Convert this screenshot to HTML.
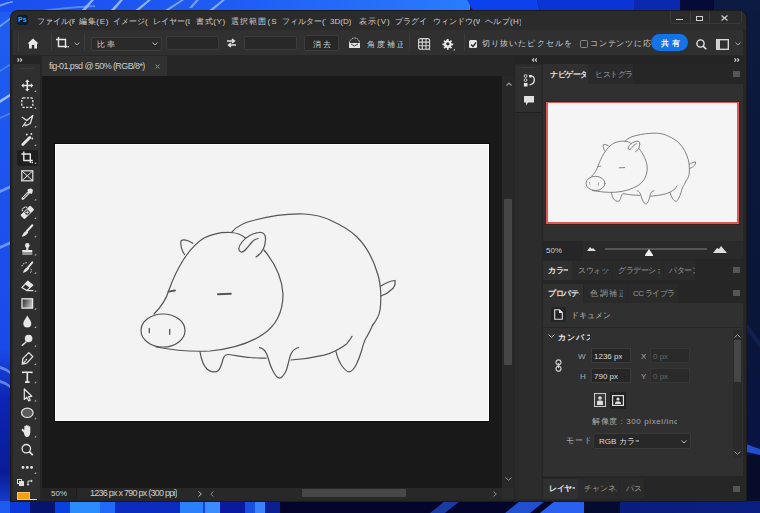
<!DOCTYPE html>
<html><head><meta charset="utf-8">
<style>
*{margin:0;padding:0;box-sizing:border-box}
html,body{width:760px;height:513px;overflow:hidden;background:#0b1a3f;font-family:"Liberation Sans",sans-serif;color:#d0d0d0}
.a{position:absolute}
.t{position:absolute;white-space:nowrap;font-size:8px;line-height:11px;color:#cfcfcf;overflow:hidden}
svg{position:absolute;overflow:visible}
</style></head><body>
<!-- wallpaper -->
<svg class="a" style="left:0;top:0" width="760" height="513" viewBox="0 0 760 513">
  <defs>
    <linearGradient id="gl" x1="0" y1="0" x2="0" y2="1">
      <stop offset="0" stop-color="#1f5ef2"/><stop offset="0.68" stop-color="#1a4ae8"/><stop offset="0.78" stop-color="#0c24b4"/><stop offset="0.92" stop-color="#0a1c98"/><stop offset="1" stop-color="#1a46dc"/>
    </linearGradient>
    <linearGradient id="gr" x1="0" y1="0" x2="0" y2="1">
      <stop offset="0" stop-color="#0b1a3e"/><stop offset="0.6" stop-color="#0a1638"/><stop offset="1" stop-color="#08124a"/>
    </linearGradient>
    <linearGradient id="gt" x1="0" y1="0" x2="1" y2="0">
      <stop offset="0" stop-color="#1a4ef0"/><stop offset="0.5" stop-color="#1f5cf5"/><stop offset="1" stop-color="#2a7cff"/>
    </linearGradient>
    <linearGradient id="gb" x1="0" y1="0" x2="1" y2="0">
      <stop offset="0" stop-color="#081660"/><stop offset="1" stop-color="#0a1f80"/>
    </linearGradient>
  </defs>
  <rect x="0" y="0" width="760" height="513" fill="url(#gr)"/>
  <rect x="0" y="0" width="12" height="513" fill="url(#gl)"/>
  <rect x="0" y="0" width="470" height="12" fill="url(#gt)"/>
  <polygon points="467,0 537,0 540,12 474,12" fill="#0c42ee"/>
  <polygon points="537,0 634,0 636,12 540,12" fill="#0a34d4"/>
  <rect x="634" y="0" width="46" height="12" fill="#0b28b0"/>
  <rect x="680" y="0" width="34" height="12" fill="#050a36"/>
  <rect x="714" y="0" width="46" height="12" fill="#0b1b42"/>
  <path d="M0,4.5 C4,3 8,2 13,1 L13,2.5 C8,3.5 4,5 0,6.5Z" fill="#8fb6ff" opacity="0.8"/>
  <path d="M35,11 C55,8 75,6 95,5 L95,7 C75,8 55,10 38,12Z" fill="#6aa0ff" opacity="0.7"/>
  <path d="M80,12 L91,0 L94,0 L84,12Z" fill="#a9c8ff" opacity="0.8"/>
  <path d="M109,12 L120,0 L123,0 L113,12Z" fill="#a9c8ff" opacity="0.8"/>
  <path d="M133,12 L148,0 L151,0 L137,12Z" fill="#a9c8ff" opacity="0.8"/>
  <path d="M162,12 L181,0 L184,0 L166,12Z" fill="#a9c8ff" opacity="0.7"/>
  <path d="M189,8 L196,0 L199,0 L192,8Z" fill="#a9c8ff" opacity="0.6"/>
  <path d="M207,12 L222,0 L225,0 L211,12Z" fill="#a9c8ff" opacity="0.7"/>
  <path d="M0,25 L11,17 L11,19 L0,27.5Z" fill="#9cc0ff" opacity="0.6"/>
  <path d="M0,70 L11,63 L11,65 L0,72Z" fill="#9cc0ff" opacity="0.35"/>
  <path d="M0,100 L11,93 L11,96 L0,103Z" fill="#b8d4ff" opacity="0.8"/>
  <path d="M0,117 L11,112 L11,114 L0,119Z" fill="#a0c4ff" opacity="0.35"/>
  <path d="M0,190 L11,185 L11,188 L0,193Z" fill="#a0c4ff" opacity="0.6"/>
  <path d="M0,246 L11,241 L11,244 L0,249Z" fill="#a0c4ff" opacity="0.6"/>
  <path d="M0,366 C4,367 8,369 11,372 L11,375 C8,372 4,370 0,369Z" fill="#a0c4ff" opacity="0.55"/>
  <path d="M0,380 C4,381 8,383 11,386 L11,389 C8,386 4,384 0,383Z" fill="#a0c4ff" opacity="0.55"/>
  <!-- right strip -->
  <path d="M746,322 C752,330 756,336 760,342 L760,348 C756,343 752,337 746,330Z" fill="#15285e" opacity="0.6"/>
  <path d="M746,444 C752,446 756,448 760,449 L760,455 C756,454 752,453 746,452Z" fill="#2456d8" opacity="0.9"/>
  <rect x="746" y="455" width="14" height="46" fill="#060c2a"/>
  <!-- bottom strip -->
  <rect x="0" y="501" width="760" height="12" fill="url(#gb)"/>
  <rect x="0" y="501" width="10" height="12" fill="#1d5cf0"/>
  <rect x="10" y="501" width="20" height="12" fill="#0c3ad8"/>
  <rect x="30" y="501" width="25" height="12" fill="#061470"/>
  <rect x="55" y="501" width="15" height="12" fill="#0a40e0"/>
  <rect x="70" y="501" width="30" height="12" fill="#2a8cff"/>
  <rect x="100" y="501" width="15" height="12" fill="#1f6af8"/>
  <rect x="115" y="501" width="65" height="12" fill="#0c2cc0"/>
  <rect x="180" y="501" width="23" height="12" fill="#2a80ff"/>
  <rect x="203" y="501" width="2" height="12" fill="#1a40e0"/>
  <rect x="205" y="501" width="15" height="12" fill="#3a8cff"/>
  <rect x="220" y="501" width="25" height="12" fill="#0a1aa0"/>
  <rect x="245" y="501" width="10" height="12" fill="#1a50e0"/>
  <rect x="255" y="501" width="10" height="12" fill="#3a80ff"/>
  <rect x="265" y="501" width="15" height="12" fill="#0a2090"/>
  <rect x="280" y="501" width="300" height="12" fill="#03062a"/>
  <polygon points="430,513 445,501 460,501 445,513" fill="#1a3aa0"/>
  <polygon points="505,513 520,501 545,501 530,513" fill="#2050d0"/>
  <polygon points="540,513 555,501 580,501 570,513" fill="#2a60f0"/>
  <polygon points="565,513 575,501 582,501 578,513" fill="#2a60f0"/>
  <rect x="580" y="501" width="40" height="12" fill="#050a30"/>
  <polygon points="570,513 575,504 584,501 584,513" fill="#2a60f0"/>
</svg>

<!-- window -->
<div class="a" style="left:10px;top:10px;width:737px;height:492px;background:#1a1a1a;border-radius:8px 8px 0 0"></div>
<div class="a" style="left:11px;top:11px;width:735px;height:490px;background:#262626;border-radius:7px 7px 0 0"></div>
<!-- title bar -->
<div class="a" style="left:11px;top:11px;width:735px;height:19px;background:#2b2b2b;border-radius:7px 7px 0 0"></div>
<div class="a" style="left:17px;top:15px;width:11px;height:10px;background:#001e36;border-radius:2px"></div>
<div class="t" style="left:18px;top:15px;font-size:7px;line-height:10px;color:#31a8ff;font-weight:bold">Ps</div>
<div class="t" style="left:37px;top:16px;width:38px">ファイル(F)</div>
<div class="t" style="left:79px;top:16px;letter-spacing:0.68px;width:30px">編集(E)</div>
<div class="t" style="left:113px;top:16px;width:35px">イメージ(I)</div>
<div class="t" style="left:153px;top:16px;width:37px">レイヤー(L)</div>
<div class="t" style="left:196px;top:16px;letter-spacing:0.64px;width:30px">書式(Y)</div>
<div class="t" style="left:231px;top:16px;letter-spacing:1.1px;width:46px">選択範囲(S)</div>
<div class="t" style="left:282px;top:16px;width:44px">フィルター(T)</div>
<div class="t" style="left:330px;top:16px">3D(D)</div>
<div class="t" style="left:359px;top:16px;letter-spacing:1.0px;width:31px">表示(V)</div>
<div class="t" style="left:395px;top:16px;width:33px">プラグイン</div>
<div class="t" style="left:433px;top:16px;width:47px">ウィンドウ(W)</div>
<div class="t" style="left:485px;top:16px;letter-spacing:0.35px;width:36px">ヘルプ(H)</div>
<!-- window controls -->
<div class="a" style="left:670px;top:11px;width:72px;height:13px;border:1px solid #3a3a3a;border-top:none;border-radius:0 0 3px 3px"></div>
<div class="a" style="left:690px;top:11px;width:1px;height:13px;background:#3a3a3a"></div>
<div class="a" style="left:709px;top:11px;width:1px;height:13px;background:#3a3a3a"></div>
<div class="a" style="left:676px;top:19px;width:7px;height:1px;background:#cfcfcf"></div>
<div class="a" style="left:696px;top:16px;width:7px;height:5px;border:1px solid #cfcfcf"></div>
<svg style="left:721px;top:15px" width="7" height="6"><path d="M0.5,0.5L6.5,5.5M6.5,0.5L0.5,5.5" stroke="#cfcfcf" stroke-width="1.1"/></svg>

<!-- options bar -->
<div class="a" style="left:13px;top:30px;width:730px;height:25px;background:#303030"></div>
<div class="a" style="left:18px;top:33px;width:1px;height:18px;background:#3c3c3c"></div>
<svg style="left:27px;top:38px" width="12" height="11" viewBox="0 0 12 11"><path d="M6,0.5 L11.5,5.5 L10,5.5 L10,10.5 L7.2,10.5 L7.2,7 L4.8,7 L4.8,10.5 L2,10.5 L2,5.5 L0.5,5.5Z" fill="#e8e8e8"/></svg>
<div class="a" style="left:51px;top:33px;width:1px;height:18px;background:#3c3c3c"></div>
<svg style="left:56px;top:37px" width="14" height="12" viewBox="0 0 14 12"><path d="M2.5,0 V9.5 H11 M0,2.5 H9.5 V11" fill="none" stroke="#e8e8e8" stroke-width="1.4"/><rect x="11.5" y="9" width="1.5" height="1.5" fill="#ccc"/></svg>
<svg style="left:74px;top:42px" width="6" height="4" viewBox="0 0 6 4"><path d="M0.5,0.5 L3,3 L5.5,0.5" fill="none" stroke="#aaa" stroke-width="1"/></svg>
<div class="a" style="left:84px;top:33px;width:1px;height:18px;background:#3c3c3c"></div>
<div class="a" style="left:91px;top:37px;width:71px;height:14px;background:#2a2a2a;border:1px solid #3e3e3e;border-radius:2px"></div>
<div class="t" style="left:97px;top:39px;letter-spacing:2px;width:19px">比率</div>
<svg style="left:152px;top:42px" width="6" height="4" viewBox="0 0 6 4"><path d="M0.5,0.5 L3,3 L5.5,0.5" fill="none" stroke="#bbb" stroke-width="1"/></svg>
<div class="a" style="left:166px;top:36px;width:53px;height:14px;background:#282828;border:1px solid #3c3c3c;border-radius:2px"></div>
<svg style="left:227px;top:38px" width="9" height="10" viewBox="0 0 9 10"><path d="M0,3 H7 M5,1 L7.5,3 L5,5 M9,7 H2 M4,5 L1.5,7 L4,9" fill="none" stroke="#e0e0e0" stroke-width="1.4"/></svg>
<div class="a" style="left:244px;top:36px;width:53px;height:14px;background:#282828;border:1px solid #3c3c3c;border-radius:2px"></div>
<div class="a" style="left:304px;top:35px;width:35px;height:16px;background:#272727;border:1px solid #3c3c3c;border-radius:2px"></div>
<div class="t" style="left:313px;top:39px;letter-spacing:2px;width:19px">消去</div>
<svg style="left:348px;top:37px" width="13" height="12" viewBox="0 0 13 12"><path d="M1.5,6 A5,5 0 0 1 11.5,6" fill="none" stroke="#ddd" stroke-width="1" stroke-dasharray="1.5 1"/><rect x="1" y="6" width="11" height="5" fill="#e0e0e0"/><path d="M3,7 L6.5,9 L10,7" fill="none" stroke="#303030" stroke-width="0.9"/></svg>
<div class="t" style="left:367px;top:39px;letter-spacing:2.1px;width:36px">角度補正</div>
<svg style="left:418px;top:38px" width="14" height="13" viewBox="0 0 14 13"><rect x="0.6" y="0.6" width="11" height="10.6" rx="2" fill="none" stroke="#d6d6d6" stroke-width="1.1"/><path d="M4.3,0.6V11.2 M8,0.6V11.2 M0.6,4.1H11.6 M0.6,7.7H11.6" fill="none" stroke="#d6d6d6" stroke-width="1.1"/><path d="M10.3,11.2h2.4l-1.2,1.3z" fill="#ccc"/></svg>
<div class="a" style="left:409px;top:33px;width:1px;height:18px;background:#3a3a3a"></div>
<svg style="left:442px;top:39px" width="14" height="12" viewBox="0 0 14 12"><path d="M5,0h1.6v1.6l1.3,0.6l1.1,-1.1l1.1,1.1l-1.1,1.1l0.6,1.3h1.6v1.6h-1.6l-0.6,1.3l1.1,1.1l-1.1,1.1l-1.1,-1.1l-1.3,0.6v1.6h-1.6v-1.6l-1.3,-0.6l-1.1,1.1l-1.1,-1.1l1.1,-1.1l-0.6,-1.3h-1.6v-1.6h1.6l0.6,-1.3l-1.1,-1.1l1.1,-1.1l1.1,1.1z" fill="#e8e8e8"/><circle cx="5.8" cy="4.8" r="1.6" fill="#303030"/><path d="M11,11.5h2v-2z" fill="#bbb"/></svg>
<div class="a" style="left:464px;top:33px;width:1px;height:18px;background:#3c3c3c"></div>
<div class="a" style="left:469px;top:40px;width:8px;height:8px;background:#e6e6e6;border-radius:1.5px"></div>
<svg style="left:469.5px;top:40.5px" width="7" height="7" viewBox="0 0 7 7"><path d="M1,3.5 L3,5.5 L6,1.5" fill="none" stroke="#2b2b2b" stroke-width="1.4"/></svg>
<div class="t" style="left:482px;top:38px;letter-spacing:1.1px;width:89px">切り抜いたピクセルを削除</div>
<div class="a" style="left:580px;top:40px;width:8px;height:8px;border:1px solid #8a8a8a;border-radius:1.5px"></div>
<div class="t" style="left:590px;top:38px;width:62px;letter-spacing:0.75px">コンテンツに応じる</div>
<div class="a" style="left:651px;top:34px;width:37px;height:17px;background:#1473e6;border-radius:9px"></div>
<div class="t" style="left:661px;top:38px;color:#fff;font-weight:bold;letter-spacing:3px;width:21px">共有</div>
<svg style="left:696px;top:39px" width="11" height="11" viewBox="0 0 11 11"><circle cx="4.5" cy="4.5" r="3.6" fill="none" stroke="#e6e6e6" stroke-width="1.4"/><path d="M7,7 L10.3,10.3" stroke="#e6e6e6" stroke-width="1.6"/></svg>
<svg style="left:716px;top:39px" width="13" height="11" viewBox="0 0 13 11"><rect x="0.7" y="0.7" width="11.6" height="9.6" fill="none" stroke="#e0e0e0" stroke-width="1.3"/><rect x="1" y="1" width="3" height="9" fill="#cfcfcf"/></svg>
<svg style="left:735px;top:42px" width="6" height="4" viewBox="0 0 6 4"><path d="M0.5,0.5 L3,3 L5.5,0.5" fill="none" stroke="#aaa" stroke-width="1"/></svg>

<!-- toolbar -->
<div class="a" style="left:13px;top:56px;width:27px;height:8px;background:#242424"></div>
<svg style="left:17px;top:58px" width="6" height="4" viewBox="0 0 6 4"><path d="M0.5,0.3L2,2L0.5,3.7 M3.3,0.3L4.8,2L3.3,3.7" fill="none" stroke="#ddd" stroke-width="1.1"/></svg>
<div class="a" style="left:13px;top:64px;width:27px;height:435px;background:#2f2f2f"></div>
<div class="a" style="left:20px;top:68px;width:14px;height:1px;background:#3a3a3a"></div>
<div class="a" style="left:17px;top:150px;width:21px;height:16px;background:#1f1f1f;border-radius:2px"></div>
<svg style="left:0;top:0" width="760" height="513" viewBox="0 0 760 513" fill="none" stroke="#e6e6e6" stroke-width="1.3">
<defs><linearGradient id="grd" x1="0" y1="0" x2="1" y2="0.3"><stop offset="0" stop-color="#222"/><stop offset="1" stop-color="#bdbdbd"/></linearGradient></defs>
<g transform="translate(27.3,85.5)"><path d="M0,-4.2V4.2 M-4.2,0H4.2" stroke-width="1.5"/><path d="M0,-6L-2.2,-3.6H2.2Z M0,6L-2.2,3.6H2.2Z M-6,0L-3.6,-2.2V2.2Z M6,0L3.6,-2.2V2.2Z" fill="#e6e6e6" stroke="none"/></g>
<g transform="translate(27.3,102.6)"><rect x="-5.5" y="-4.7" width="11" height="9.4" rx="1.5" stroke-width="1.3" stroke-dasharray="2.2 1.4"/></g>
<g transform="translate(27.3,121)"><path d="M-5.5,-4 L-0.5,-0.5 L5.5,-5.5 L3,2.5 L-2,5 M-1.5,1 L-5,6 M-4,4 L1,4" stroke-width="1.2" stroke-linejoin="round"/></g>
<g transform="translate(27.3,139.5)"><path d="M-4.5,5 L2.5,-2" stroke-width="2.8" stroke-linecap="round"/><circle cx="-0.5" cy="-5" r="0.9" fill="#e6e6e6" stroke="none"/><circle cx="4" cy="-5.5" r="0.9" fill="#e6e6e6" stroke="none"/><circle cx="5" cy="-1" r="0.9" fill="#e6e6e6" stroke="none"/></g>
<g transform="translate(27.3,157.5)"><path d="M-3.5,-6 V3 H5.5 M-6,-3.5 H3 V5.5" stroke-width="1.4"/><rect x="4.3" y="4.3" width="1.4" height="1.4" fill="#e6e6e6" stroke="none"/></g>
<g transform="translate(27.3,175.8)"><rect x="-5.5" y="-5" width="11" height="10" stroke-width="1.2"/><path d="M-5.5,-5 L5.5,5 M5.5,-5 L-5.5,5" stroke-width="1"/></g>
<g transform="translate(27.3,194)"><circle cx="3.3" cy="-3.3" r="2.3" fill="#e6e6e6" stroke="none"/><path d="M0.5,-4.5 L4.5,-0.5" stroke-width="1.8"/><path d="M1.5,-1.5 L-4.5,4.5" stroke-width="2.6" stroke-linecap="round"/><path d="M0.8,-0.8 L-4,4" stroke="#2f2f2f" stroke-width="0.9"/></g>
<g transform="translate(27.3,212.4)"><g transform="rotate(-45)"><rect x="-7" y="-3" width="14" height="6" rx="1.2" fill="#e6e6e6" stroke="none"/><rect x="-2.2" y="-2.2" width="4.4" height="4.4" fill="#2f2f2f" stroke="none"/><path d="M-1.5,-1.5L1.5,1.5M1.5,-1.5L-1.5,1.5" stroke-width="0.8"/></g><path d="M-5,-1 A3.5,3.5 0 0 1 0,-5" stroke-width="1"/></g>
<g transform="translate(27.3,230.7)"><path d="M5,-5.5 L-0.5,0.5" stroke-width="2" stroke-linecap="round"/><path d="M-0.5,0 C-2.5,0.5 -4.5,2.5 -5.5,6 C-2.5,5.5 -0.5,4 1,1.5Z" fill="#e6e6e6" stroke="none"/></g>
<g transform="translate(27.3,249)"><circle cx="0" cy="-3.6" r="2.3" fill="#e6e6e6" stroke="none"/><rect x="-1" y="-2" width="2" height="3" fill="#e6e6e6" stroke="none"/><rect x="-5" y="1" width="10" height="2.6" fill="#e6e6e6" stroke="none"/><path d="M-5,5 H5" stroke-width="1.1"/></g>
<g transform="translate(27.3,267.3)"><path d="M5,-5 L0.5,0.5" stroke-width="1.9" stroke-linecap="round"/><path d="M0.5,0 C-1.5,0.5 -3.5,2.5 -4.5,5.5 C-1.5,5 0.5,3.5 2,1Z" fill="#e6e6e6" stroke="none"/><path d="M-5.5,-1 C-5,-3.5 -2,-5 0.5,-4.5 M3.5,1.5 C4.5,3 4,5 2.5,6" stroke-width="1" stroke-dasharray="1.5 1"/></g>
<g transform="translate(27.3,285.6)"><path d="M-5.5,2 L0.5,-4.5 L5.5,-0.5 L-0.5,5 Z" stroke-width="1.2" stroke-linejoin="round"/><path d="M0.5,-4.5 L5.5,-0.5 L2.5,2.3 L-2.5,-1.5Z" fill="#e6e6e6" stroke="none"/><path d="M-0.5,5 H6" stroke-width="1.2"/></g>
<g transform="translate(27.3,303.3)"><rect x="-5.3" y="-4.5" width="10.6" height="9.3" fill="url(#grd)" stroke-width="1.3"/></g>
<g transform="translate(27.3,321.6)"><path d="M0,-6 C2,-2.5 4,-0.5 4,2 A4,4 0 0 1 -4,2 C-4,-0.5 -2,-2.5 0,-6Z" fill="#e6e6e6" stroke="none"/></g>
<g transform="translate(27.3,340.3)"><circle cx="1.3" cy="-1.8" r="3.8" fill="#e6e6e6" stroke="none"/><path d="M-1,1.5 L-5.5,5.5" stroke-width="1.5"/></g>
<g transform="translate(27.3,358.6)"><path d="M-5,5.5 L-4.5,0 L1.5,-6 L5.5,-2 L-0.5,4.5 Z" stroke-width="1.3" stroke-linejoin="round"/><circle cx="-1" cy="1" r="0.9" fill="#e6e6e6" stroke="none"/><path d="M-5,5.5 L-1.5,2"/></g>
<g transform="translate(27.3,376.8)"><path d="M-4.5,-4.5 H4.5 M-4.5,-5.2 V-3.5 M4.5,-5.2 V-3.5 M0,-4.5 V5 M-2.3,5.3 H2.3" stroke-width="1.6"/></g>
<g transform="translate(27.3,395)"><path d="M-3,-6 L-3,4.5 L-0.5,2.2 L1.5,6 L3,5.3 L1.2,1.6 L4.5,1.3 Z" stroke-width="1.2" stroke-linejoin="round"/></g>
<g transform="translate(27.3,412.8)"><ellipse cx="0" cy="0" rx="5.8" ry="4.7" fill="#5c5c5c" stroke-width="1.2"/></g>
<g transform="translate(27.3,431)"><path d="M-3.5,1.5 L-5.5,-0.5 C-6.2,-1.5 -5,-2.8 -4,-1.8 L-3,-0.8 V-4.5 C-3,-5.6 -1.5,-5.6 -1.5,-4.5 V-5.3 C-1.5,-6.4 0,-6.4 0,-5.3 V-5 C0,-6 1.5,-6 1.5,-5 V-4 C1.5,-5 3,-5 3,-4 V1 C3,4 1.5,6 -0.5,6 C-2.5,6 -3,3.5 -3.5,1.5Z" fill="#e6e6e6" stroke="none"/></g>
<g transform="translate(27.3,449.7)"><circle cx="-1" cy="-1" r="4.2" stroke-width="1.3"/><path d="M2,2 L5.5,5.5" stroke-width="1.7"/></g>
<g transform="translate(27.3,467.4)"><circle cx="-4.3" cy="0" r="1.4" fill="#e6e6e6" stroke="none"/><circle cx="0" cy="0" r="1.4" fill="#e6e6e6" stroke="none"/><circle cx="4.3" cy="0" r="1.4" fill="#e6e6e6" stroke="none"/></g>
<path d="M34.2,92.0h2v-2z M34.2,109.1h2v-2z M34.2,127.5h2v-2z M34.2,146.0h2v-2z M34.2,164.0h2v-2z M34.2,200.5h2v-2z M34.2,218.9h2v-2z M34.2,237.2h2v-2z M34.2,255.5h2v-2z M34.2,273.8h2v-2z M34.2,292.1h2v-2z M34.2,309.8h2v-2z M34.2,328.1h2v-2z M34.2,346.8h2v-2z M34.2,365.1h2v-2z M34.2,383.3h2v-2z M34.2,401.5h2v-2z M34.2,419.3h2v-2z M34.2,437.5h2v-2z M34.2,473.9h2v-2z" fill="#b0b0b0" stroke="none"/>
</svg>
<!-- fg/bg -->
<div class="a" style="left:17px;top:479px;width:5px;height:5px;border:1px solid #ddd;background:#222"></div>
<div class="a" style="left:19px;top:481px;width:5px;height:5px;background:#ddd"></div>
<svg style="left:27px;top:479px" width="7" height="7" viewBox="0 0 7 7"><path d="M1,6V2H5 M4,1l1.3,1l-1.3,1 M0,5l1,1.3l1,-1.3" fill="none" stroke="#ddd" stroke-width="1"/></svg>
<div class="a" style="left:17px;top:492px;width:13px;height:8px;background:#f5a00f;border:1px solid #f8c060"></div>
<div class="a" style="left:30px;top:499px;width:7px;height:1px;background:#ddd"></div>

<!-- document tab row -->
<div class="a" style="left:42px;top:56px;width:472px;height:20px;background:#262626"></div>
<div class="a" style="left:42px;top:56px;width:125px;height:20px;background:#303030"></div>
<div class="t" style="left:49px;top:61px;font-size:9px;letter-spacing:-0.6px">fig-01.psd @ 50% (RGB/8*)</div>
<svg style="left:155px;top:64px" width="5" height="5" viewBox="0 0 5 5"><path d="M0.5,0.5L4.5,4.5M4.5,0.5L0.5,4.5" stroke="#999" stroke-width="0.9"/></svg>
<!-- canvas area -->
<div class="a" style="left:42px;top:76px;width:460px;height:412px;background:#191919"></div>
<div class="a" style="left:502px;top:76px;width:12px;height:412px;background:#282828"></div>
<svg style="left:505.5px;top:81.5px" width="6" height="4" viewBox="0 0 6 4"><path d="M0.5,3.5 L3,1 L5.5,3.5" fill="none" stroke="#9a9a9a" stroke-width="1.2"/></svg>
<div class="a" style="left:504px;top:199px;width:8px;height:166px;background:#464646;border-radius:1px"></div>
<svg style="left:505px;top:477px" width="7" height="4" viewBox="0 0 7 4"><path d="M0.5,0.5 L3.5,3.3 L6.5,0.5" fill="none" stroke="#999" stroke-width="1"/></svg>
<!-- status bar -->
<div class="a" style="left:42px;top:488px;width:460px;height:11px;background:#282828"></div>
<div class="a" style="left:42px;top:488px;width:34px;height:11px;background:#242424"></div>
<div class="a" style="left:76px;top:488px;width:1px;height:11px;background:#1e1e1e"></div>
<div class="a" style="left:502px;top:488px;width:12px;height:11px;background:#2c2c2c"></div>
<div class="t" style="left:51px;top:488px">50%</div>
<div class="t" style="left:90px;top:488px;font-size:9px;letter-spacing:-0.75px">1236 px x 790 px (300 ppi)</div>
<svg style="left:198px;top:491px" width="4" height="6" viewBox="0 0 4 6"><path d="M0.5,0.5 L3.3,3 L0.5,5.5" fill="none" stroke="#bbb" stroke-width="1"/></svg>
<svg style="left:210px;top:491px" width="4" height="6" viewBox="0 0 4 6"><path d="M3.5,0.5 L0.7,3 L3.5,5.5" fill="none" stroke="#888" stroke-width="1"/></svg>
<div class="a" style="left:302px;top:489px;width:104px;height:8px;background:#474747;border-radius:1px"></div>
<svg style="left:493px;top:491px" width="4" height="6" viewBox="0 0 4 6"><path d="M0.5,0.5 L3.3,3 L0.5,5.5" fill="none" stroke="#888" stroke-width="1"/></svg>

<!-- image on canvas -->
<div class="a" style="left:54px;top:143px;width:436px;height:279px;background:#0e0e0e"></div>
<div class="a" style="left:55px;top:144px;width:434px;height:277px;background:#f3f3f3;border:1px solid #fbfbfb"></div>
<svg style="left:56px;top:144px" width="432" height="276" viewBox="56 144 432 276" fill="none" stroke="#555" stroke-width="1.2" stroke-linecap="round">
 <g id="pig">
 <ellipse cx="163" cy="330.5" rx="22" ry="16.5"/>
 <path d="M149.3,328.3v4.4 M169.7,329.5v4.8" stroke-width="1.3"/>
 <path d="M154,314 C160,308 166,300 169,290 C176,270 188,248 204,238 C214,233 224,232 231.5,232.5 C237,233 242,235 245.5,238"/>
 <path d="M264,250 C274,262 282,278 283,294 C283,312 276,326 262,335 C248,344 230,349 210,351 C190,352 172,350 156,347"/>
 <path d="M192.8,243.3 C188,240 183,239 181,241 C180,245 182,251 184.5,254.5"/>
 <path d="M256,257 C261,254 265,249 265.5,240 C266,234 263,232 259,232.5 C253,233 246,237 242,242 C238,247 238,251 241,252 C244,253 247,248 252,242 C254,240 256,239 258,238.5"/>
 <path d="M231.5,232.5 C236,227 245,222 255,220 C270,216 288,213.5 304,214 C316,214.5 324,217 332,221 C343,226 351,231 357,237 C367,247 374,261 378,275 C381,285 381.5,300 380,310 C379,316 376,321 372.7,325"/>
 <path d="M380.5,286.3 C384,284 390,281 395,280.5 C395.5,284 394,288 391,290 C388,293 384,295 381,296"/>
 <path d="M200,351.8 C201,358 203,365 207,369 C210,372 215,373 218.5,370.5 C221,368 222,362 223.5,358 C224.5,355 226,354.3 229,354.5 C236,355.5 243,357 250,357.5 C256,358 262,358 266,358.2"/>
 <path d="M259.5,347.6 C262,347.8 264,349 266.5,353.5 C268,357 270,366 273,371 C275,375 277,378 279.5,378.2 C282,378 284,375 286,371 C288,366 289,359 290.5,355 C292,351 294,348.5 298.6,347.5"/>
 <path d="M291,360 C300,359.5 312,358 324,355.2 C332,353 340,349 346.6,344 C349,341 351,338.5 352,336.3"/>
 <path d="M336,351.7 C337,356 339,362 342,366 C345,370 347,371.8 349,371.8 C352,371.5 354,369 356,365 C358,361 360,356 361.5,351 C363,346 364,341 366,338 C368,335 370,331 372.7,325"/>
 <path d="M218,294.3 L230.8,293.8" stroke-width="2"/>
 <path d="M168.5,291.6 L175,290.5" stroke-width="1.8"/>
 </g>
</svg>

<!-- collapsed panel column -->
<div class="a" style="left:515px;top:56px;width:228px;height:8px;background:#242424"></div>
<svg style="left:532px;top:58px" width="6" height="4" viewBox="0 0 6 4"><path d="M2,0.3L0.5,2L2,3.7 M4.8,0.3L3.3,2L4.8,3.7" fill="none" stroke="#ddd" stroke-width="1.1"/></svg>
<div class="a" style="left:515px;top:64px;width:27px;height:435px;background:#2a2a2a"></div>
<div class="a" style="left:516px;top:65px;width:25px;height:47px;background:#2f2f2f"></div>
<div class="a" style="left:516px;top:112px;width:25px;height:1px;background:#202020"></div>
<div class="a" style="left:519px;top:113px;width:22px;height:386px;background:#2c2c2c"></div>
<div class="a" style="left:521px;top:67px;width:14px;height:1px;background:#3a3a3a"></div>
<svg style="left:523px;top:74px" width="13" height="13" viewBox="0 0 13 13"><circle cx="2.6" cy="2" r="1.4" fill="none" stroke="#cfcfcf" stroke-width="1"/><circle cx="2.6" cy="6.1" r="1.4" fill="none" stroke="#cfcfcf" stroke-width="1"/><rect x="0.9" y="9" width="3.6" height="3.5" fill="#e6e6e6"/><path d="M7.5,1.9 C10,1.9 11.3,3.6 11.3,6 C11.3,8.5 9.5,10.3 6.5,10.9" fill="none" stroke="#dedede" stroke-width="1.4"/><path d="M6,0.8 L8.8,1.2 L8.2,3.8 L6.3,3.3Z" fill="#eee"/></svg>
<svg style="left:524px;top:96px" width="11" height="10" viewBox="0 0 11 10"><path d="M0,0 H10 V6.5 H4 L2,9.5 V6.5 H0Z" fill="#e0e0e0"/></svg>

<!-- right panel column -->

<svg style="left:734px;top:58px" width="6" height="4" viewBox="0 0 6 4"><path d="M0.5,0.3L2,2L0.5,3.7 M3.3,0.3L4.8,2L3.3,3.7" fill="none" stroke="#ddd" stroke-width="1.1"/></svg>
<!-- navigator tabs -->
<div class="a" style="left:543px;top:64px;width:200px;height:20px;background:#262626"></div>
<div class="a" style="left:543px;top:64px;width:45px;height:20px;background:#303030"></div>
<div class="t" style="left:550px;top:69px;color:#e6e6e6;letter-spacing:-0.5px;font-weight:bold;width:36px">ナビゲーター</div>
<div class="a" style="left:588px;top:64px;width:45px;height:20px;background:#2a2a2a"></div>
<div class="t" style="left:595px;top:69px;color:#999;letter-spacing:-0.4px;width:37px">ヒストグラム</div>
<div class="a" style="left:733px;top:71px;width:7px;height:6px;background:#555"></div>
<!-- navigator body -->
<div class="a" style="left:543px;top:84px;width:200px;height:157px;background:#303030"></div>
<div class="a" style="left:545px;top:101px;width:195px;height:124px;background:#3c2222"></div>
<div class="a" style="left:546px;top:102px;width:193px;height:122px;background:#de5858"></div>
<div class="a" style="left:548px;top:103px;width:189px;height:119px;background:#f5f5f5"></div>
<svg style="left:548px;top:103px" width="189" height="119" viewBox="56 144 432 276" fill="none" stroke="#707070" stroke-width="2" stroke-linecap="round">
 <use href="#pig"/>
</svg>
<!-- zoom bar -->
<div class="a" style="left:543px;top:241px;width:200px;height:18px;background:#2a2a2a"></div>
<div class="a" style="left:543px;top:241px;width:40px;height:18px;background:#262626"></div>
<div class="t" style="left:546px;top:245px">50%</div>
<svg style="left:587px;top:246px" width="9" height="5" viewBox="0 0 9 5"><path d="M0,5 L3,1 L5,3 L6,2 L9,5Z" fill="#ddd"/></svg>
<div class="a" style="left:605px;top:248px;width:102px;height:2px;background:#555"></div>
<svg style="left:645px;top:249px" width="8" height="7" viewBox="0 0 8 7"><path d="M4,0 L8,6 L8,7 L0,7 L0,6Z" fill="#f0f0f0"/></svg>
<svg style="left:713px;top:246px" width="14" height="7" viewBox="0 0 14 7"><path d="M0,7 L4,2 L6,3 L8,0 L14,7Z" fill="#ddd"/></svg>
<!-- color tabs -->
<div class="a" style="left:543px;top:261px;width:200px;height:19px;background:#262626"></div>
<div class="a" style="left:543px;top:261px;width:29px;height:19px;background:#303030"></div>
<div class="t" style="left:548px;top:265px;color:#e6e6e6;letter-spacing:-0.5px;font-weight:bold;width:20px">カラー</div>
<div class="a" style="left:572px;top:261px;width:40px;height:19px;background:#2a2a2a"></div>
<div class="t" style="left:578px;top:265px;color:#999;letter-spacing:-0.5px;width:31px">スウォッチ</div>
<div class="a" style="left:613px;top:261px;width:50px;height:19px;background:#2a2a2a"></div>
<div class="t" style="left:618px;top:265px;color:#999;letter-spacing:-0.5px;width:42px">グラデーション</div>
<div class="a" style="left:664px;top:261px;width:31px;height:19px;background:#2a2a2a"></div>
<div class="t" style="left:669px;top:265px;color:#999;letter-spacing:-0.4px;width:26px">パターン</div>
<div class="a" style="left:733px;top:267px;width:7px;height:6px;background:#555"></div>
<!-- properties tabs -->
<div class="a" style="left:543px;top:284px;width:200px;height:19px;background:#262626"></div>
<div class="a" style="left:543px;top:284px;width:40px;height:19px;background:#303030"></div>
<div class="t" style="left:548px;top:288px;color:#e6e6e6;letter-spacing:-0.4px;font-weight:bold;width:32px">プロパティ</div>
<div class="a" style="left:584px;top:284px;width:43px;height:19px;background:#2a2a2a"></div>
<div class="t" style="left:590px;top:288px;color:#999;letter-spacing:1.5px;width:33px">色調補正</div>
<div class="a" style="left:628px;top:284px;width:50px;height:19px;background:#2a2a2a"></div>
<div class="t" style="left:633px;top:288px;color:#999;letter-spacing:-0.6px;width:43px">CC ライブラリ</div>
<div class="a" style="left:733px;top:290px;width:7px;height:6px;background:#555"></div>
<!-- properties body -->
<div class="a" style="left:543px;top:303px;width:200px;height:173px;background:#303030"></div>
<div class="a" style="left:551px;top:307px;width:15px;height:15px;background:#232323;border-radius:2px"></div>
<svg style="left:554px;top:309px" width="9" height="11" viewBox="0 0 9 11"><path d="M0.7,0.7 H5.5 L8.3,3.5 V10.3 H0.7Z M5.5,0.7 V3.5 H8.3" fill="none" stroke="#e0e0e0" stroke-width="1.1"/></svg>
<div class="t" style="left:571px;top:310px;color:#bbb;width:39px">ドキュメント</div>
<div class="a" style="left:543px;top:327px;width:200px;height:1px;background:#262626"></div>
<svg style="left:548px;top:334px" width="7" height="4" viewBox="0 0 7 4"><path d="M0.5,0.5 L3.5,3.3 L6.5,0.5" fill="none" stroke="#bbb" stroke-width="1"/></svg>
<div class="t" style="left:558px;top:332px;color:#eee;font-weight:bold;letter-spacing:1.2px;width:32px">カンバス</div>
<!-- props scrollbar -->
<div class="a" style="left:733px;top:330px;width:9px;height:128px;background:#2a2a2a"></div>
<svg style="left:734px;top:334px" width="7" height="4" viewBox="0 0 7 4"><path d="M0.5,3.5 L3.5,0.7 L6.5,3.5" fill="none" stroke="#999" stroke-width="1"/></svg>
<div class="a" style="left:734px;top:340px;width:7px;height:42px;background:#464646"></div>
<svg style="left:734px;top:451px" width="7" height="4" viewBox="0 0 7 4"><path d="M0.5,0.5 L3.5,3.3 L6.5,0.5" fill="none" stroke="#999" stroke-width="1"/></svg>
<!-- W/H -->
<div class="t" style="left:578px;top:351px;color:#aaa">W</div>
<div class="a" style="left:591px;top:348px;width:40px;height:15px;background:#262626;border:1px solid #3a3a3a"></div>
<div class="t" style="left:594px;top:351px;color:#ddd">1236 px</div>
<div class="t" style="left:641px;top:351px;color:#aaa">X</div>
<div class="a" style="left:650px;top:348px;width:40px;height:15px;background:#2a2a2a;border:1px solid #363636"></div>
<div class="t" style="left:653px;top:351px;color:#666">0 px</div>
<div class="t" style="left:580px;top:371px;color:#aaa">H</div>
<div class="a" style="left:591px;top:368px;width:40px;height:15px;background:#262626;border:1px solid #3a3a3a"></div>
<div class="t" style="left:594px;top:371px;color:#ddd">790 px</div>
<div class="t" style="left:641px;top:371px;color:#aaa">Y</div>
<div class="a" style="left:650px;top:368px;width:40px;height:15px;background:#2a2a2a;border:1px solid #363636"></div>
<div class="t" style="left:653px;top:371px;color:#666">0 px</div>
<svg style="left:555px;top:359px" width="7" height="13" viewBox="0 0 7 13"><rect x="1" y="0.8" width="5" height="5" rx="2.5" fill="none" stroke="#ccc" stroke-width="1.2"/><rect x="1" y="7.2" width="5" height="5" rx="2.5" fill="none" stroke="#ccc" stroke-width="1.2"/><path d="M3.5,4 V9" stroke="#ccc" stroke-width="1.2"/></svg>
<!-- orientation -->
<div class="a" style="left:594px;top:393px;width:12px;height:14px;border:1px solid #ccc;background:#3a3a3a"></div>
<svg style="left:594px;top:393px" width="12" height="14" viewBox="0 0 12 14"><circle cx="6" cy="5" r="1.8" fill="#ddd"/><path d="M3,12 V9 C3,8 4,7.5 6,7.5 C8,7.5 9,8 9,9 V12Z" fill="#ddd"/></svg>
<div class="a" style="left:610px;top:392px;width:16px;height:17px;background:#232323"></div>
<svg style="left:612px;top:395px" width="12" height="11" viewBox="0 0 12 11"><rect x="0.6" y="0.6" width="10.8" height="9.8" fill="none" stroke="#ddd" stroke-width="1.2"/><circle cx="6" cy="4" r="1.6" fill="#ddd"/><path d="M3,9 C3,7 4,6.3 6,6.3 C8,6.3 9,7 9,9Z" fill="#ddd"/></svg>
<div class="t" style="left:592px;top:416px;color:#aaa;letter-spacing:0.6px;width:85px">解像度 : 300 pixel/inch</div>
<div class="t" style="left:566px;top:435px;color:#aaa;letter-spacing:1.0px;width:24px">モード</div>
<div class="a" style="left:593px;top:433px;width:98px;height:16px;background:#282828;border:1px solid #3a3a3a;border-radius:2px"></div>
<div class="t" style="left:599px;top:436px;color:#ddd;width:40px">RGB カラー</div>
<svg style="left:681px;top:440px" width="6" height="4" viewBox="0 0 6 4"><path d="M0.5,0.5 L3,3 L5.5,0.5" fill="none" stroke="#bbb" stroke-width="1"/></svg>
<!-- layers tabs -->
<div class="a" style="left:543px;top:479px;width:200px;height:20px;background:#262626"></div>
<div class="a" style="left:543px;top:479px;width:35px;height:20px;background:#303030"></div>
<div class="t" style="left:549px;top:483px;color:#e6e6e6;letter-spacing:-0.3px;font-weight:bold;width:26px">レイヤー</div>
<div class="a" style="left:578px;top:479px;width:41px;height:20px;background:#2a2a2a"></div>
<div class="t" style="left:584px;top:483px;color:#999;width:33px">チャンネル</div>
<div class="a" style="left:620px;top:479px;width:24px;height:20px;background:#2a2a2a"></div>
<div class="t" style="left:626px;top:483px;color:#999;width:15px">パス</div>
<div class="a" style="left:733px;top:486px;width:7px;height:6px;background:#555"></div>
</body></html>
